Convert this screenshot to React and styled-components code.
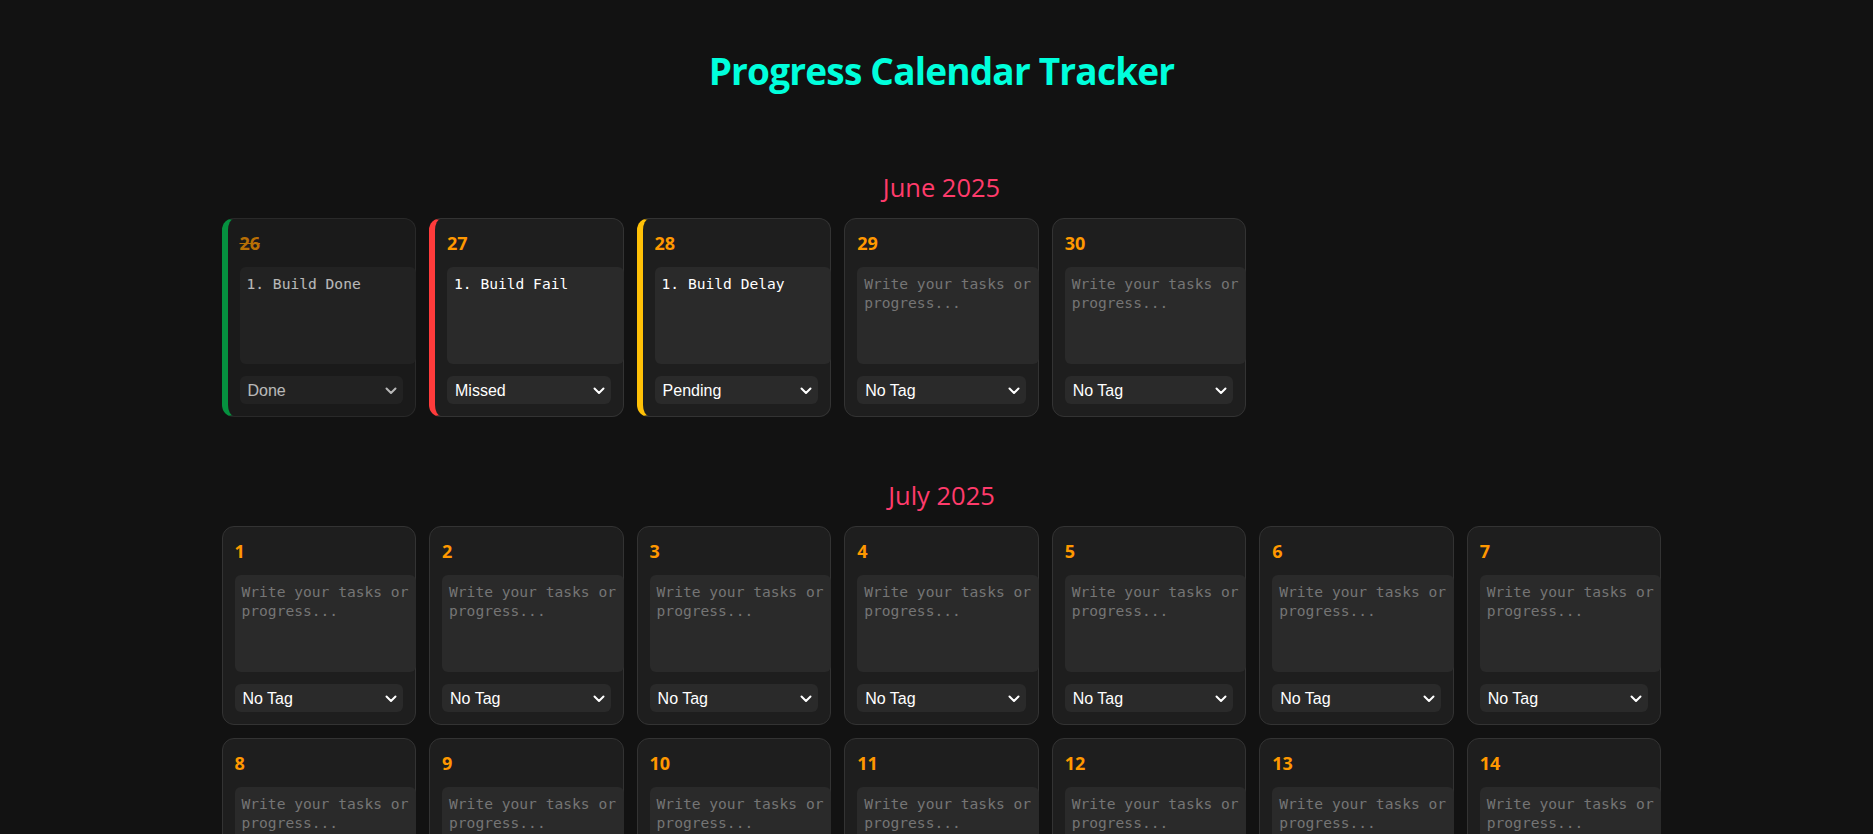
import React, { useState } from 'react'
import styled, { createGlobalStyle } from 'styled-components'

const GlobalStyle = createGlobalStyle`
  html, body {
    margin: 0;
    padding: 0;
    background: #121212;
  }
  * {
    box-sizing: border-box;
  }
`;

const TAG_COLORS = {
  Done: '#00c853',
  Missed: '#ff3b3b',
  Pending: '#ffc107',
}

const TAGS = ['No Tag', 'Done', 'Missed', 'Pending']

const Page = styled.div`
  padding: 48px 0 40px 10px;
  font-family: "Open Sans", "Noto Sans", sans-serif;
  color: #fff;
`;

const Title = styled.h1`
  margin: 0 0 76px;
  text-align: center;
  font-size: 37px;
  line-height: 46px;
  font-weight: 700;
  letter-spacing: -0.8px;
  color: #00ffdc;
`;

const MonthSection = styled.section`
  max-width: 1440px;
  margin: 0 auto 61px;
`;

const MonthTitle = styled.h2`
  margin: 0 0 13.5px;
  text-align: center;
  font-size: 25.5px;
  line-height: 34px;
  font-weight: 400;
  color: #ff3b6b;
`;

const Grid = styled.div`
  display: grid;
  grid-template-columns: repeat(7, minmax(0, 1fr));
  gap: 12.8px;
`;

const Card = styled.div`
  background: #1e1e1e;
  border: 1px solid #333;
  border-left: ${p => (p.$accent ? `6px solid ${p.$accent}` : '1px solid #333')};
  border-radius: 12px;
  padding: 12px;
  opacity: ${p => (p.$done ? 0.7 : 1)};
`;

const DayNumber = styled.div`
  font-size: 18px;
  line-height: 24px;
  font-weight: 700;
  color: #ff9800;
  margin-bottom: 12.5px;
  text-decoration: ${p => (p.$done ? 'line-through' : 'none')};
`;

const Notes = styled.textarea`
  display: block;
  box-sizing: content-box;
  width: 100%;
  height: 84px;
  padding: 7px 6px 6px 7px;
  margin: 0 0 12px;
  border: none;
  border-radius: 6px;
  background: #2a2a2a;
  color: #fff;
  font-family: "DejaVu Sans Mono", "Liberation Mono", monospace;
  font-size: 14.6px;
  line-height: 19px;
  resize: none;
  outline: none;

  &::placeholder {
    color: #757575;
  }
`;

const SelectWrap = styled.div`
  position: relative;
`;

const TagSelect = styled.select`
  display: block;
  width: 100%;
  height: 28px;
  padding: 0 26px 0 8px;
  border: none;
  border-radius: 6px;
  background: #2a2a2a;
  color: #fff;
  font-family: "Liberation Sans", Arial, sans-serif;
  font-size: 16px;
  appearance: none;
  -webkit-appearance: none;
  outline: none;
`;

const Chevron = styled.svg`
  position: absolute;
  right: 6px;
  top: 50%;
  width: 12px;
  height: 8px;
  margin-top: -3px;
  pointer-events: none;
`;

function DayCard({ day, entry, onChange }) {
  const accent = TAG_COLORS[entry.tag]
  const done = entry.tag === 'Done'
  return (
    <Card $accent={accent} $done={done}>
      <DayNumber $done={done}>{day}</DayNumber>
      <Notes
        placeholder="Write your tasks or progress..."
        value={entry.text}
        onChange={e => onChange({ ...entry, text: e.target.value })}
      />
      <SelectWrap>
        <TagSelect
          value={entry.tag}
          onChange={e => onChange({ ...entry, tag: e.target.value })}
        >
          {TAGS.map(t => (
            <option key={t} value={t}>{t}</option>
          ))}
        </TagSelect>
        <Chevron viewBox="0 0 12 8">
          <polyline points="1.5,1.5 6,6 10.5,1.5" fill="none" stroke="#fff" strokeWidth="2" strokeLinecap="round" strokeLinejoin="round" />
        </Chevron>
      </SelectWrap>
    </Card>
  )
}

const initialMonths = () => {
  const june = {}
  for (let d = 26; d <= 30; d++) june[d] = { text: '', tag: 'No Tag' }
  june[26] = { text: '1. Build Done', tag: 'Done' }
  june[27] = { text: '1. Build Fail', tag: 'Missed' }
  june[28] = { text: '1. Build Delay', tag: 'Pending' }

  const july = {}
  for (let d = 1; d <= 31; d++) july[d] = { text: '', tag: 'No Tag' }

  return [
    { key: '2025-06', label: 'June 2025', days: june },
    { key: '2025-07', label: 'July 2025', days: july },
  ]
}

export default function App() {
  const [months, setMonths] = useState(initialMonths)

  const updateDay = (monthKey, day, entry) => {
    setMonths(prev =>
      prev.map(m => (m.key === monthKey ? { ...m, days: { ...m.days, [day]: entry } } : m))
    )
  }

  return (
    <Page>
      <GlobalStyle />
      <Title>Progress Calendar Tracker</Title>
      {months.map(month => (
        <MonthSection key={month.key}>
          <MonthTitle>{month.label}</MonthTitle>
          <Grid>
            {Object.keys(month.days).map(day => (
              <DayCard
                key={day}
                day={day}
                entry={month.days[day]}
                onChange={entry => updateDay(month.key, day, entry)}
              />
            ))}
          </Grid>
        </MonthSection>
      ))}
    </Page>
  )
}
